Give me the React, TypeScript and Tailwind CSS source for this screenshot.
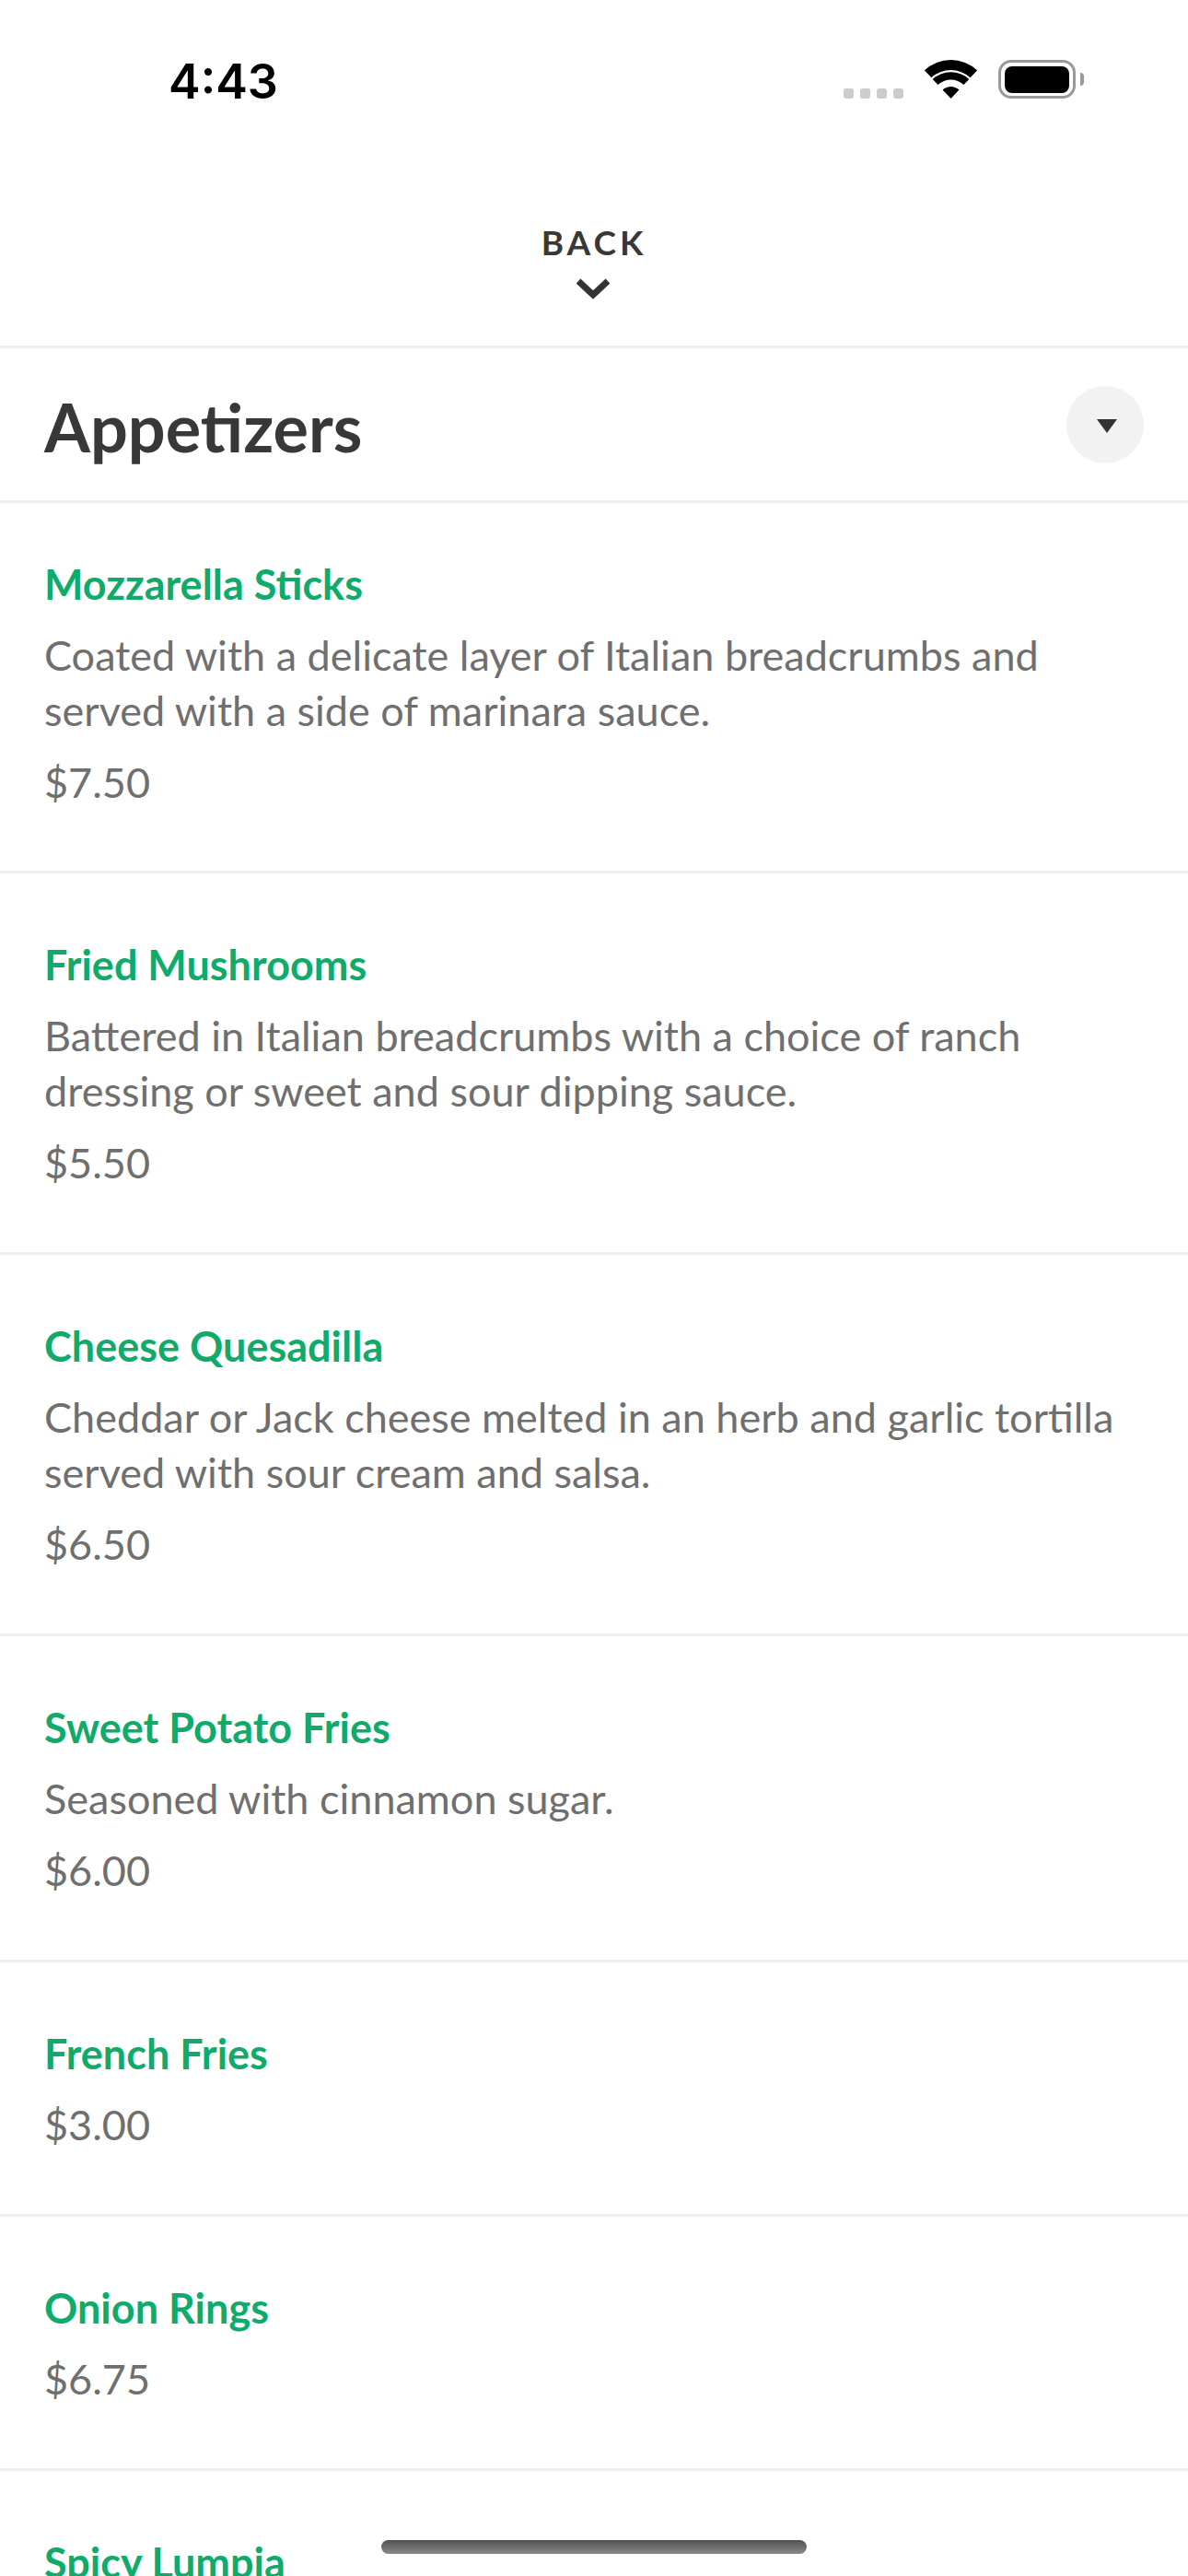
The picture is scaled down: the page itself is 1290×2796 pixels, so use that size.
import React from "react";

interface MenuItem {
  name: string;
  description?: string;
  price?: string;
}

const items: MenuItem[] = [
  {
    name: "Mozzarella Sticks",
    description:
      "Coated with a delicate layer of Italian breadcrumbs and served with a side of marinara sauce.",
    price: "$7.50",
  },
  {
    name: "Fried Mushrooms",
    description:
      "Battered in Italian breadcrumbs with a choice of ranch dressing or sweet and sour dipping sauce.",
    price: "$5.50",
  },
  {
    name: "Cheese Quesadilla",
    description:
      "Cheddar or Jack cheese melted in an herb and garlic tortilla served with sour cream and salsa.",
    price: "$6.50",
  },
  {
    name: "Sweet Potato Fries",
    description: "Seasoned with cinnamon sugar.",
    price: "$6.00",
  },
  { name: "French Fries", price: "$3.00" },
  { name: "Onion Rings", price: "$6.75" },
  { name: "Spicy Lumpia" },
];

const StatusBar: React.FC = () => (
  <div className="flex h-[42px] items-center justify-between pl-[183px] pr-[113px] font-['Inter',sans-serif]">
    <span className="mt-[6px] text-[52px] font-semibold leading-[42px] text-black">4:43</span>
    <div className="flex h-full items-end">
      <div className="flex gap-[7px]">
        <span className="h-[11px] w-[11px] rounded-[3px] bg-[#cccccc]" />
        <span className="h-[11px] w-[11px] rounded-[3px] bg-[#cccccc]" />
        <span className="h-[11px] w-[11px] rounded-[3px] bg-[#cccccc]" />
        <span className="h-[11px] w-[11px] rounded-[3px] bg-[#cccccc]" />
      </div>
      <svg className="ml-[23px]" width="57" height="42" viewBox="0 0 57 42" fill="#000">
        <path d="M-0.1 11.3A42 42 0 0 1 57.1 11.3L49.6 19.3A31 31 0 0 0 7.4 19.3Z" />
        <path d="M8.7 21A29 29 0 0 1 48.3 21L42.5 27A20.5 20.5 0 0 0 14.5 27Z" />
        <path d="M19.6 32.5A13 13 0 0 1 37.4 32.5L28.5 42Z" />
      </svg>
      <div className="ml-[23px] flex h-full items-center">
        <div className="flex h-[42px] w-[84px] items-center justify-center rounded-[14px] border-[3.5px] border-[#999999]">
          <div className="h-[29px] w-[70px] rounded-[8px] bg-black" />
        </div>
        <span className="ml-[5px] h-[14px] w-[4px] rounded-r-[4px] bg-[#999999]" />
      </div>
    </div>
  </div>
);

const Row: React.FC<{ item: MenuItem; first: boolean }> = ({ item, first }) => (
  <div
    className={`flex flex-col gap-[18px] border-b-[3px] border-[#efefef] ${
      first ? "pb-[66px] pt-[58px]" : "pb-[67px] pt-[69px]"
    } px-[48px]`}
  >
    <h3 className="-mb-px text-[45px] font-bold leading-[60px] text-[#10ab6b]">{item.name}</h3>
    {item.description && (
      <p className="text-[45px] leading-[60px] text-[#6f6f6f]">{item.description}</p>
    )}
    {item.price && <p className="text-[45px] leading-[60px] text-[#6f6f6f]">{item.price}</p>}
  </div>
);

export default function App() {
  return (
    <div className="relative h-[2796px] w-[1290px] overflow-hidden bg-white pt-[65px] font-['Lato',sans-serif]">
      <StatusBar />

      <div className="flex h-[271px] flex-col items-center border-b-[3px] border-[#efefef] pt-[134px]">
        <span className="text-[37px] font-bold leading-[44px] tracking-[4px] text-[#383838]">BACK</span>
        <svg className="mr-[3px] mt-[17px]" width="36" height="24" viewBox="0 0 36 24" fill="none">
          <polyline points="2,3 18,18 34,3" stroke="#333333" strokeWidth="7" />
        </svg>
      </div>

      <div className="flex h-[168px] items-center justify-between border-b-[3px] border-[#efefef] px-[48px]">
        <h1 className="mt-[4px] text-[72px] font-bold leading-none text-[#383838]">Appetizers</h1>
        <button className="flex h-[84px] w-[84px] items-center justify-center rounded-full bg-[#f2f2f2]">
          <svg className="ml-[3px] mt-[3px]" width="22" height="15" viewBox="0 0 22 15" fill="#333333">
            <path d="M0 0H22L11 15Z" />
          </svg>
        </button>
      </div>

      {items.map((item, i) => (
        <Row key={item.name} item={item} first={i === 0} />
      ))}

      <div className="absolute left-[414px] top-[2757px] h-[15px] w-[462px] rounded-full bg-gradient-to-b from-[#505050] to-[#8a8a8a]" />
    </div>
  );
}
